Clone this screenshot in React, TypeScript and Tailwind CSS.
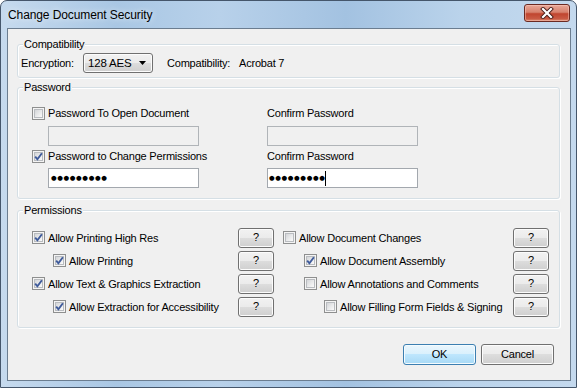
import React from "react";

const btn =
  "flex items-center justify-center border border-[#707070] rounded-[3px] bg-[linear-gradient(to_bottom,#f2f2f2_0%,#ebebeb_50%,#dddddd_50%,#cfcfcf_100%)] shadow-[inset_0_0_0_1px_#fcfcfc] text-black";

function CheckBox({ checked }: { checked?: boolean }) {
  return (
    <span className="relative inline-flex shrink-0 w-[13px] h-[13px] border border-[#8e8f8f] bg-[#f4f4f4] p-[1px]">
      <span className="block w-full h-full border border-[#b9bcc0] bg-[linear-gradient(135deg,#d3d5d8_0%,#e8e9ea_50%,#fbfbfb_100%)]" />
      {checked && (
        <svg
          className="absolute left-0 top-0"
          width="11"
          height="11"
          viewBox="0 0 11 11"
        >
          <path
            d="M2.2 5.6 L4.4 8.3 L8.9 2.2"
            stroke="#3f5b9b"
            strokeWidth="1.9"
            fill="none"
            strokeLinejoin="miter"
          />
        </svg>
      )}
    </span>
  );
}

function Group({
  label,
  className,
  children,
}: {
  label: string;
  className?: string;
  children?: React.ReactNode;
}) {
  return (
    <div
      className={
        "relative shrink-0 border border-[#d5dfe5] rounded-[3px] shadow-[inset_1px_1px_0_#ffffff,1px_1px_0_#ffffff] " +
        (className ?? "")
      }
    >
      <span className="absolute left-[5px] top-[-9px] px-[1px] bg-[#f0f0f0] leading-[16px]">
        {label}
      </span>
      {children}
    </div>
  );
}

function Check({
  label,
  checked,
  className,
}: {
  label: string;
  checked?: boolean;
  className?: string;
}) {
  return (
    <div className={"flex items-center gap-[3px] " + (className ?? "")}>
      <CheckBox checked={checked} />
      <span className="leading-[16px] whitespace-nowrap">{label}</span>
    </div>
  );
}

function Dots() {
  return (
    <span className="font-['DejaVu_Sans',sans-serif] text-[6.5px] tracking-[0.6px] leading-[18px] text-black">
      ●●●●●●●●●
    </span>
  );
}

function Q() {
  return <div className={btn + " w-[36px] h-[20px] shrink-0"}>?</div>;
}

function PermRow({
  label,
  checked,
  indent,
}: {
  label: string;
  checked?: boolean;
  indent: string;
}) {
  return (
    <div className="h-[23px] flex items-center justify-between">
      <Check label={label} checked={checked} className={indent} />
      <Q />
    </div>
  );
}

function CloseButton() {
  return (
    <div className="mt-[3px] w-[46px] h-[18px] shrink-0 rounded-[3px] border border-[#6b2a22] bg-[linear-gradient(to_bottom,#e9a797_0%,#d7826e_45%,#c0452f_55%,#c95a44_85%,#dc8c72_100%)] shadow-[inset_0_0_0_1px_rgba(255,210,200,0.45)] flex items-center justify-center">
      <svg width="14" height="12" viewBox="0 0 14 12">
        <path
          d="M3 2 L11 10 M11 2 L3 10"
          stroke="#4a1d18"
          strokeWidth="4"
          strokeLinecap="square"
        />
        <path
          d="M3 2 L11 10 M11 2 L3 10"
          stroke="#ffffff"
          strokeWidth="2.2"
          strokeLinecap="square"
        />
      </svg>
    </div>
  );
}

export default function App() {
  return (
    <div className="w-[577px] h-[388px] flex flex-col overflow-hidden rounded-t-[7px] border border-[#45566b] bg-[linear-gradient(90deg,#c6daee_0%,#a9c7e4_20%,#b8d1ea_38%,#a3c2e1_60%,#bad3eb_80%,#c4d9ee_100%)] font-['Liberation_Sans',Arial,sans-serif] text-[11px] tracking-[-0.2px] text-black">
      <div className="h-[27px] shrink-0 flex justify-between pl-[7px] pr-[6px]">
        <span className="mt-[7px] text-[12px] tracking-[-0.1px] leading-[15px] text-black [text-shadow:0_0_6px_rgba(255,255,255,0.9)]">
          Change Document Security
        </span>
        <CloseButton />
      </div>

      <div className="ml-[6px] mr-[5px] h-[353px] shrink-0 border border-[#6b7d90] bg-[#f0f0f0] pl-[9px] pr-[10px] pt-[15px] flex flex-col">
        <Group label="Compatibility" className="h-[34px] pt-[8px] pl-[3px]">
          <div className="flex items-center h-[20px]">
            <span className="w-[62px] leading-[16px]">Encryption:</span>
            <div className={btn + " w-[70px] h-[20px] !justify-between pl-[4px] pr-[6px]"}>
              <span className="leading-[16px] text-[11.5px]">128 AES</span>
              <svg width="7" height="4" viewBox="0 0 7 4">
                <path d="M0 0 H7 L3.5 4 Z" fill="#000" />
              </svg>
            </div>
            <span className="ml-[14px] w-[72px] leading-[16px]">Compatibility:</span>
            <span className="leading-[16px]">Acrobat 7</span>
          </div>
        </Group>

        <Group label="Password" className="mt-[9px] h-[112px] pt-[17px] pl-[14px] flex">
          <div className="w-[235px] flex flex-col">
            <Check label="Password To Open Document" className="h-[16px]" />
            <div className="ml-[16px] mt-[5px] w-[151px] h-[20px] border border-[#b0b4b8] bg-[#f0f0f0]" />
            <Check label="Password to Change Permissions" checked className="mt-[2px] h-[16px]" />
            <div className="ml-[16px] mt-[4px] w-[151px] h-[20px] border border-[#a3a8ae] bg-white pl-[2px] flex items-center">
              <Dots />
            </div>
          </div>
          <div className="flex flex-col">
            <span className="h-[16px] leading-[16px]">Confirm Password</span>
            <div className="mt-[5px] w-[151px] h-[20px] border border-[#b0b4b8] bg-[#f0f0f0]" />
            <span className="mt-[2px] h-[16px] leading-[16px]">Confirm Password</span>
            <div className="mt-[4px] w-[151px] h-[20px] border border-[#a3a8ae] bg-white pl-[1px] flex items-center">
              <Dots />
              <span className="w-[1px] h-[15px] bg-black" />
            </div>
          </div>
        </Group>

        <Group label="Permissions" className="mt-[11px] h-[118px] pt-[15px] pl-[14px] flex gap-[9px]">
          <div className="w-[242px] flex flex-col">
            <PermRow label="Allow Printing High Res" checked indent="" />
            <PermRow label="Allow Printing" checked indent="pl-[21px]" />
            <PermRow label="Allow Text & Graphics Extraction" checked indent="" />
            <PermRow label="Allow Extraction for Accessibility" checked indent="pl-[21px]" />
          </div>
          <div className="w-[266px] flex flex-col">
            <PermRow label="Allow Document Changes" indent="" />
            <PermRow label="Allow Document Assembly" checked indent="pl-[21px]" />
            <PermRow label="Allow Annotations and Comments" indent="pl-[21px]" />
            <PermRow label="Allow Filling Form Fields & Signing" indent="pl-[41px]" />
          </div>
        </Group>

        <div className="mt-[16px] mr-[6px] flex justify-end gap-[5px]">
          <div className="w-[73px] h-[21px] flex items-center justify-center rounded-[3px] border border-[#3c7fb1] bg-[linear-gradient(to_bottom,#eaf6fd_0%,#d9f0fc_50%,#bee6fd_50%,#a7d9f5_100%)] shadow-[inset_0_0_0_1px_#f4fbfe]">
            OK
          </div>
          <div className={btn + " w-[73px] h-[21px]"}>Cancel</div>
        </div>
      </div>
    </div>
  );
}
